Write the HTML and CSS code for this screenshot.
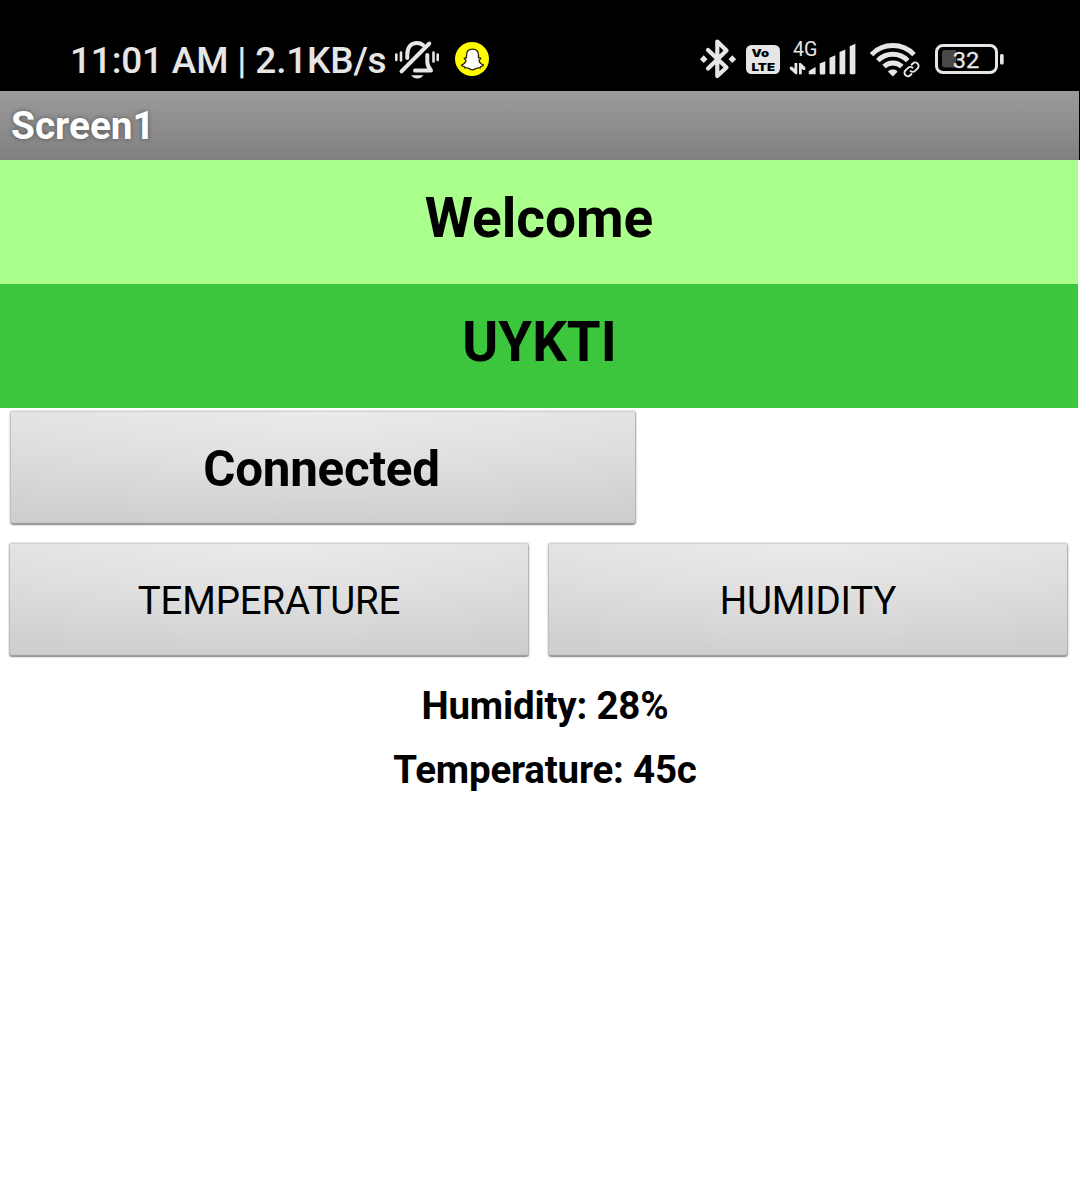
FILE: index.html
```html
<!DOCTYPE html>
<html lang="en">
<head>
<meta charset="utf-8">
<meta name="viewport" content="width=device-width, initial-scale=1">
<title>Screen1</title>
<link rel="stylesheet" href="styles.css">
</head>
<body>
<header class="status">
  <span class="status-text">11:01 AM | 2.1KB/s</span>
  <svg class="icon bell" width="48" height="91" viewBox="393 0 48 91" fill="none" stroke="#e6e6e6" stroke-width="4" stroke-linecap="round" stroke-linejoin="round">
    <path d="M407.300 58V54.500C407.300 47 411 43 417 43c2.500 0 4.500.8 6 2M415 70.500H431C428.500 67.500 427.300 65.500 427.300 62V55"/>
    <path d="M429.300 43.500 401.500 71.300"/>
    <path d="M411 75.200h12.500c-1.500 2-3.700 3.300-6.200 3.300s-4.800-1.300-6.300-3.300z" fill="#e6e6e6" stroke="none"/>
    <path d="M396.300 54.500v5.500M401 52.500v8M433.500 52.500v9M437.700 54.500v5.500" stroke-width="2.600"/>
  </svg>
  <svg class="icon snap" width="34" height="91" viewBox="455 0 34 91">
    <circle cx="472" cy="59" r="17" fill="#fffc00"/>
    <path d="M472.500 49.200c-3.800 0-6 2.600-6 6.200v2.300c-.8.300-1.600 0-2.200.6-.3 1 1.500 1.300 1.700 2.100.2 1.400-2.300 3.900-4.300 4.500-.5.900 1.200 1.400 2.600 1.700l.6 1.300c1.200.2 2.600-.2 3.600.4 1.100.8 2.200 1.500 4 1.500s2.900-.7 4-1.500c1-.6 2.400-.2 3.600-.4l.6-1.300c1.400-.3 3.100-.8 2.600-1.700-2-.6-4.500-3.100-4.300-4.500.2-.8 2-1.100 1.700-2.100-.6-.6-1.400-.3-2.200-.6v-2.300c0-3.600-2.200-6.200-6-6.200z" fill="#fff" stroke="#1d1d00" stroke-width="1.300" stroke-linejoin="round"/>
  </svg>
  <svg class="icon bt" width="38" height="91" viewBox="699 0 38 91" fill="none" stroke="#e6e6e6" stroke-width="4.200" stroke-linejoin="round" stroke-linecap="round">
    <path d="M708 50 726.500 67.500 717.300 76V41.500L726.500 50.500 708 68.500"/>
    <path d="M703.700 55.300 707.500 59.200 703.700 63.100 699.900 59.200zM732.300 55.300 736.100 59.200 732.300 63.100 728.500 59.200z" fill="#e6e6e6" stroke="none"/>
  </svg>
  <svg class="icon volte" width="34" height="91" viewBox="746 0 34 91">
    <rect x="746" y="45" width="34" height="29" rx="5.500" fill="#e6e6e6"/>
    <text class="volte-text" x="751.500" y="57.400" textLength="17.500" lengthAdjust="spacingAndGlyphs">Vo</text>
    <text class="volte-text" x="751.500" y="70.600" textLength="23.500" lengthAdjust="spacingAndGlyphs">LTE</text>
  </svg>
  <svg class="icon signal" width="68" height="91" viewBox="789 0 68 91" fill="#e6e6e6">
    <text class="net-text" x="793" y="56.400" textLength="24.500" lengthAdjust="spacingAndGlyphs">4G</text>
    <path d="M794.500 63h2.800v11.300h-1.800L789.800 69v-2.300h2.500l2.200 2z"/>
    <path d="M801.800 74.300h-2.800V63h1.800l4.500 4.300v2.800h-2l-1.500-1.300z"/>
    <path d="M808.800 74.300v-2.800l1.500-1.500 5.300-3v7.300z"/>
    <path d="M819.700 63.500 825.300 61.200v12a1.300 1.300 0 0 1-1.300 1.300h-3a1.300 1.300 0 0 1-1.300-1.300z"/>
    <path d="M829.500 57.700 835.300 55.300V73a1.300 1.300 0 0 1-1.300 1.300h-3.200a1.300 1.300 0 0 1-1.300-1.300z"/>
    <path d="M839.500 52 845.300 49.600V73a1.300 1.300 0 0 1-1.300 1.300h-3.200a1.300 1.300 0 0 1-1.300-1.300z"/>
    <path d="M849.700 46.200 855.400 43.800V73a1.300 1.300 0 0 1-1.300 1.300h-3.100a1.300 1.300 0 0 1-1.300-1.300z"/>
  </svg>
  <svg class="icon wifi" width="50" height="91" viewBox="870 0 50 91" fill="none" stroke="#e6e6e6" stroke-width="4.900">
    <path d="M871.500 54.600A29.500 29.500 0 0 1 914 54.600"/>
    <path d="M877.800 60.600A21 21 0 0 1 907.800 60.600"/>
    <path d="M884 66.600A12.800 12.800 0 0 1 901.800 66.600"/>
    <path d="M892.800 76.500 888.300 72c-.8-1 1.800-2.600 4.500-2.600s5.200 1.600 4.500 2.600z" fill="#e6e6e6" stroke="none"/>
    <g transform="rotate(-43 911.500 69.300)" stroke="#000" stroke-width="4"><rect x="903" y="66" width="10" height="7" rx="3.500"/><rect x="910" y="66" width="10" height="7" rx="3.500"/></g>
    <g transform="rotate(-43 911.500 69.300)" stroke="#e6e6e6" stroke-width="1.900"><path d="M909 72.800H906.500a3.400 3.400 0 0 1 0-6.800h3.500a3.500 3.500 0 0 1 3.500 3.500"/><path d="M914 66h2.500a3.400 3.400 0 0 1 0 6.800h-3.500a3.500 3.500 0 0 1-3.500-3.500"/></g>
  </svg>
  <svg class="icon battery" width="70" height="91" viewBox="934 0 70 91">
    <rect x="936.500" y="45.500" width="60" height="27" rx="6.500" fill="none" stroke="#e6e6e6" stroke-width="3"/>
    <path d="M945 50h11v17.500h-11a3 3 0 0 1-3-3V53a3 3 0 0 1 3-3z" fill="#484848"/>
    <rect x="1000" y="54" width="3.700" height="10.500" rx="1.500" fill="#e6e6e6"/>
    <text class="battery-text" x="952.700" y="68" textLength="26.500" lengthAdjust="spacingAndGlyphs">32</text>
  </svg>
</header>
<h1 class="title-bar">Screen1</h1>
<main class="screen">
  <div class="banner banner-light"><span>Welcome</span></div>
  <div class="banner banner-dark"><span>UYKTI</span></div>
  <button class="btn btn-connect">Connected</button>
  <div class="actions">
    <button class="btn">TEMPERATURE</button>
    <button class="btn">HUMIDITY</button>
  </div>
  <div class="readings">
    <p>Humidity: 28%</p>
    <p>Temperature: 45c</p>
  </div>
</main>
</body>
</html>
```
FILE: styles.css
```css
* {
  box-sizing: border-box;
}

body {
  margin: 0;
  min-height: 1188px;
  background: #fff;
  color: #000;
  font-family: Roboto, "Liberation Sans", sans-serif;
}

.status {
  display: flex;
  height: 91px;
  padding-left: 70px;
  background: #000;
}

.status-text {
  width: 323px;
  line-height: 121px;
  color: #e6e6e6;
  font-size: 36.900px;
  font-weight: 500;
  letter-spacing: -0.150px;
  white-space: nowrap;
}

.icon {
  display: block;
  flex: none;
}

.snap { margin-left: 14px; }
.bt { margin-left: 210px; }
.volte { margin-left: 9px; }
.signal { margin-left: 9px; }
.wifi { margin-left: 13px; }
.battery { margin-left: 14px; }

.volte-text {
  fill: #000;
  font: 900 10.700px Inter, sans-serif;
}

.net-text {
  font: 400 19.500px Roboto, sans-serif;
}

.battery-text {
  fill: #e6e6e6;
  font: 400 22.500px Roboto, sans-serif;
  stroke: #e6e6e6;
  stroke-width: 0.300px;
}

.title-bar {
  height: 69px;
  margin: 0;
  padding-left: 11px;
  border-right: 1px solid #000;
  background: linear-gradient(#9b9b9b, #808080);
  color: #fff;
  font-size: 38.800px;
  font-weight: 700;
  line-height: 69px;
  text-shadow: 0 0 5px rgba(0, 0, 0, 0.400);
}

.screen {
  display: flex;
  flex-direction: column;
}

.banner {
  width: 1078px;
  height: 124px;
  font-size: 55px;
  font-weight: 700;
  line-height: 116px;
  text-align: center;
}

.banner-light { background: #aaff8d; }

.banner-dark {
  padding-left: 1px;
  background: #3bc63d;
  font-size: 54.600px;
  line-height: 117px;
}

.btn {
  height: 114px;
  padding: 1px 0 0;
  border: 0;
  border-radius: 3px;
  background: radial-gradient(ellipse 75% 110% at 50% 0, rgba(255, 255, 255, 0.350), rgba(255, 255, 255, 0)), linear-gradient(#e0e0e0, #cdcdcd);
  box-shadow: inset 0 1px 0 #d2d2d2, inset 1px 0 0 #c0c0c0, inset -1px 0 0 #b4b4b4, inset 0 -2px 1px #999, 0 0 2px rgba(0, 0, 0, 0.350);
  color: #000;
  font-family: inherit;
  font-size: 38.500px;
  font-weight: 400;
  letter-spacing: -0.200px;
}

.btn-connect {
  width: 626px;
  margin: 3px 0 0 9.500px;
  padding: 2px 2px 0 0;
  font-size: 49.300px;
  font-weight: 700;
  letter-spacing: -0.250px;
}

.actions {
  display: grid;
  grid-template-columns: 1fr 1fr;
  gap: 19px;
  margin: 18px 12px 0 9px;
}

.readings {
  padding: 17px 0 0 10px;
  font-size: 38.500px;
  font-weight: 700;
  letter-spacing: -0.200px;
  line-height: 64px;
  text-align: center;
}

.readings p {
  margin: 0;
}
```
